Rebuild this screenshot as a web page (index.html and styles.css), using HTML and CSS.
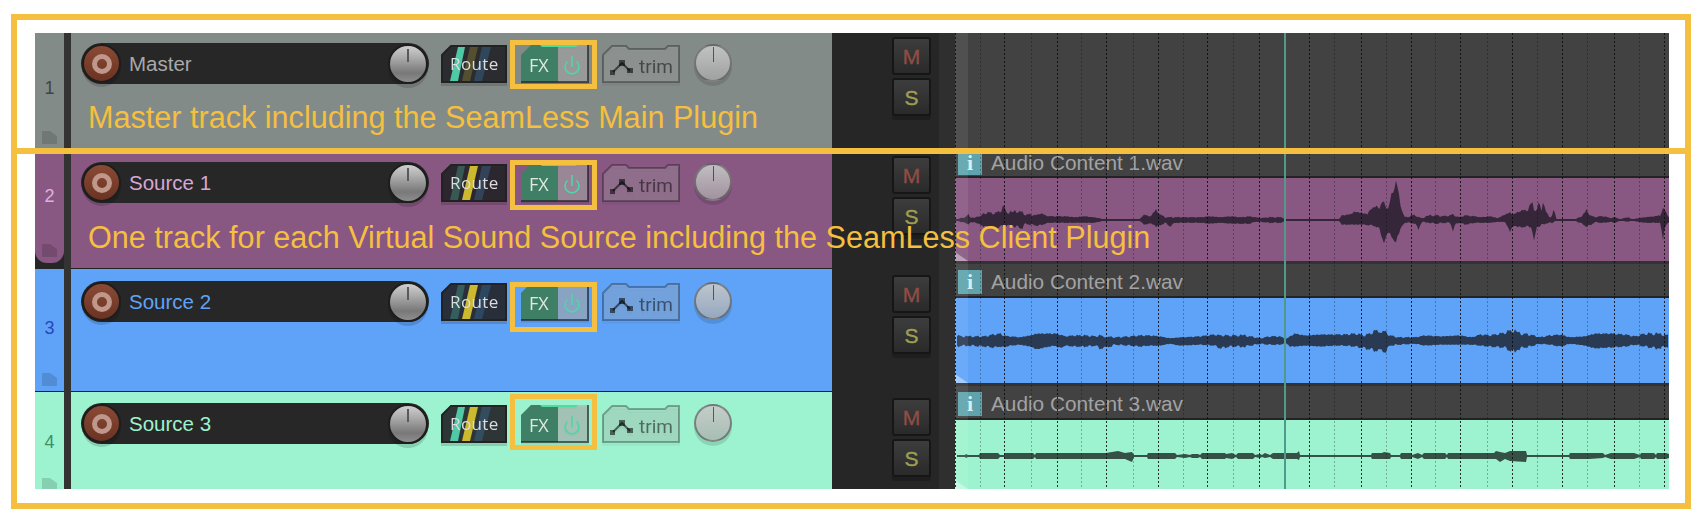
FILE: index.html
```html
<!DOCTYPE html>
<html lang="en">
<head>
  <meta charset="UTF-8">
  <title>SeamLess session tracks</title>
  <link rel="stylesheet" href="styles.css">
</head>
<body>
  <svg class="defs" width="0" height="0">
    <symbol id="route" viewBox="0 0 66 38">
      <path class="route-bg" d="M1 10L10 1H65V37H1Z"/>
      <path class="bar-teal" d="M17 2H24L17 36H9Z"/>
      <path class="bar-yellow" d="M29 2H37L29 36H21Z"/>
      <path class="bar-blue" d="M41 2H50L41 36H33Z"/>
    </symbol>
    <symbol id="fx" viewBox="0 0 69 39">
      <path class="fx-off" d="M38 1H68V38H38Z"/>
      <path class="fx-on" d="M1 11L11 1H38V38H1Z"/>
      <path class="fx-edge" d="M68 1V38H1"/>
      <path class="fx-led" d="M20 1H58L56 3H22Z"/>
      <path class="fx-power" d="M47.5 17.5A7 7 0 1 0 56.5 17.5M52 12V23"/>
    </symbol>
    <symbol id="trim" viewBox="0 0 78 38">
      <path class="trim-bg" d="M1 10L10 1H24L27 4H63L66 1H77V37H1Z"/>
      <path class="trim-line" d="M11 27L20 18L28 26"/>
      <path class="trim-dots" d="M8 25H13V30H8ZM17 15H23V21H17ZM25 23H31V28H25Z"/>
    </symbol>
    <symbol id="folder" viewBox="0 0 15 13">
      <path d="M0 0H8L15 5V13H0Z"/>
    </symbol>
  </svg>

  <div class="session">
    <div class="tracks">
      <div class="track t1">
        <div class="num"><span>1</span><svg class="folder"><use href="#folder"/></svg></div>
        <div class="sep"></div>
        <div class="panel">
          <div class="namebar">
            <div class="rec"></div>
            <span class="name">Master</span>
            <div class="knob"></div>
          </div>
          <svg class="btn-route" viewBox="0 0 66 38"><use href="#route"/><text class="route-text" x="9" y="25">Route</text></svg>
          <div class="fx-slot"><svg class="btn-fx" viewBox="0 0 69 39"><use href="#fx"/><text class="fx-text" x="9" y="28">FX</text></svg></div>
          <svg class="btn-trim" viewBox="0 0 78 38"><use href="#trim"/><text class="trim-text" x="37" y="28">trim</text></svg>
          <div class="pan"></div>
          <div class="note">Master track including the SeamLess Main Plugin</div>
        </div>
        <div class="ms"><div class="ms-btn mute">M</div><div class="ms-btn solo">S</div></div>
        <div class="gutter"></div>
      </div>

      <div class="track t2">
        <div class="num"><span>2</span><svg class="folder"><use href="#folder"/></svg></div>
        <div class="sep"></div>
        <div class="panel">
          <div class="namebar">
            <div class="rec"></div>
            <span class="name">Source 1</span>
            <div class="knob"></div>
          </div>
          <svg class="btn-route" viewBox="0 0 66 38"><use href="#route"/><text class="route-text" x="9" y="25">Route</text></svg>
          <div class="fx-slot"><svg class="btn-fx" viewBox="0 0 69 39"><use href="#fx"/><text class="fx-text" x="9" y="28">FX</text></svg></div>
          <svg class="btn-trim" viewBox="0 0 78 38"><use href="#trim"/><text class="trim-text" x="37" y="28">trim</text></svg>
          <div class="pan"></div>
          <div class="note">One track for each Virtual Sound Source including the SeamLess Client Plugin</div>
        </div>
        <div class="ms"><div class="ms-btn mute">M</div><div class="ms-btn solo">S</div></div>
        <div class="gutter"></div>
      </div>

      <div class="track t3">
        <div class="num"><span>3</span><svg class="folder"><use href="#folder"/></svg></div>
        <div class="sep"></div>
        <div class="panel">
          <div class="namebar">
            <div class="rec"></div>
            <span class="name">Source 2</span>
            <div class="knob"></div>
          </div>
          <svg class="btn-route" viewBox="0 0 66 38"><use href="#route"/><text class="route-text" x="9" y="25">Route</text></svg>
          <div class="fx-slot"><svg class="btn-fx" viewBox="0 0 69 39"><use href="#fx"/><text class="fx-text" x="9" y="28">FX</text></svg></div>
          <svg class="btn-trim" viewBox="0 0 78 38"><use href="#trim"/><text class="trim-text" x="37" y="28">trim</text></svg>
          <div class="pan"></div>
        </div>
        <div class="ms"><div class="ms-btn mute">M</div><div class="ms-btn solo">S</div></div>
        <div class="gutter"></div>
      </div>

      <div class="track t4">
        <div class="num"><span>4</span><svg class="folder"><use href="#folder"/></svg></div>
        <div class="sep"></div>
        <div class="panel">
          <div class="namebar">
            <div class="rec"></div>
            <span class="name">Source 3</span>
            <div class="knob"></div>
          </div>
          <svg class="btn-route" viewBox="0 0 66 38"><use href="#route"/><text class="route-text" x="9" y="25">Route</text></svg>
          <div class="fx-slot"><svg class="btn-fx" viewBox="0 0 69 39"><use href="#fx"/><text class="fx-text" x="9" y="28">FX</text></svg></div>
          <svg class="btn-trim" viewBox="0 0 78 38"><use href="#trim"/><text class="trim-text" x="37" y="28">trim</text></svg>
          <div class="pan"></div>
        </div>
        <div class="ms"><div class="ms-btn mute">M</div><div class="ms-btn solo">S</div></div>
        <div class="gutter"></div>
      </div>
    </div>

    <div class="arrange">
      <div class="empty-lane"></div>

      <div class="take">
        <div class="take-head head-1"><span class="info">i</span><span class="take-name">Audio Content 1.wav</span></div>
        <div class="take-body body-1"><svg class="wave" id="wave1" viewBox="955 -42 714 83" preserveAspectRatio="none"><path/><polygon class="fade" points="955,32 955,41 968,41"/></svg></div>
      </div>
      <div class="take">
        <div class="take-head"><span class="info">i</span><span class="take-name">Audio Content 2.wav</span></div>
        <div class="take-body body-2"><svg class="wave" id="wave2" viewBox="955 -43 714 85" preserveAspectRatio="none"><path/><polygon class="fade" points="955,33 955,42 968,42"/></svg></div>
      </div>
      <div class="take">
        <div class="take-head"><span class="info">i</span><span class="take-name">Audio Content 3.wav</span></div>
        <div class="take-body body-3"><svg class="wave" id="wave3" viewBox="955 -36 714 69" preserveAspectRatio="none"><path/><polygon class="fade" points="955,24 955,33 968,33"/></svg></div>
      </div>

      <svg class="grid" viewBox="955 0 714 456">
        <rect class="grid-strip" x="955" y="0" width="13" height="456"/>
        <path class="grid-weak" d="M980.5 0V456M1031.5 0V456M1081.5 0V456M1133.5 0V456M1183.5 0V456M1233.5 0V456M1334.5 0V456M1386.5 0V456M1435.5 0V456M1487.5 0V456M1537.5 0V456M1587.5 0V456M1639.5 0V456"/>
        <path class="grid-strong" d="M955.5 0V456M1004.5 0V456M1057.5 0V456M1106.5 0V456M1158.5 0V456M1207.5 0V456M1259.5 0V456M1309.5 0V456M1361.5 0V456M1411.5 0V456M1460.5 0V456M1512.5 0V456M1562.5 0V456M1614.5 0V456M1664.5 0V456"/>
        <path class="playhead" d="M1285 0V456"/>
      </svg>
    </div>
  </div>

  <div class="callout callout-master"></div>
  <div class="callout callout-sources"></div>

  <script src="waves.js"></script>
</body>
</html>
```

FILE: styles.css
```css
html, body {
  margin: 0;
  background: #fff;
}

body {
  position: relative;
  width: 1708px;
  height: 524px;
  overflow: hidden;
  font-family: "Liberation Sans", Arial, sans-serif;
}

.defs {
  position: absolute;
}

.session {
  display: flex;
  width: 1634px;
  height: 456px;
  margin: 33px 0 0 35px;
  overflow: hidden;
}

/* track control panels */
.tracks {
  width: 920px;
  flex: none;
  background: #262626;
}

.track {
  display: flex;
}

.t1 {
  --tint: #838b89;
  --num: #3d4544;
  --label: #a9a9a9;
  --num-top: 45px;
  --bar-top: 10px;
  --ms-top: 4px;
  --teal: 1;
  --yellow: .25;
  --blue: .3;
  --fx-top: -4px;
  --fx-h: 49px;
  height: 117px;
}

.t2 {
  --tint: #885782;
  --num: #e2aee0;
  --label: #d8a6d4;
  --num-top: 36px;
  --bar-top: 12px;
  --ms-top: 6px;
  --teal: .3;
  --yellow: 1;
  --blue: .3;
  --fx-top: -3px;
  --fx-h: 50px;
  height: 119px;
}

.t3 {
  --tint: #5fa3f8;
  --num: #2747b8;
  --label: #5fa3f8;
  --num-top: 49px;
  --bar-top: 12px;
  --ms-top: 6px;
  --teal: .3;
  --yellow: 1;
  --blue: .3;
  --fx-top: 0px;
  --fx-h: 50px;
  height: 123px;
}

.t4 {
  --tint: #9df3cf;
  --num: #3f8f68;
  --label: #9df3cf;
  --num-top: 40px;
  --bar-top: 11px;
  --ms-top: 6px;
  --teal: 1;
  --yellow: 1;
  --blue: .3;
  --fx-top: -10px;
  --fx-h: 56px;
  height: 105px;
}

.num {
  display: flex;
  flex-direction: column;
  align-items: center;
  box-sizing: border-box;
  width: 29px;
  padding-top: var(--num-top);
  background: var(--tint);
  color: var(--num);
  font-size: 18px;
  line-height: 20px;
  box-shadow: inset 0 -1px 0 #222;
}

.t2 .num {
  height: 113px;
  border-radius: 0 0 12px 12px;
  box-shadow: none;
}

.folder {
  width: 15px;
  height: 13px;
  margin-top: auto;
  margin-bottom: 6px;
  fill: rgba(0, 0, 0, .14);
}

.sep {
  width: 7px;
  background: #333;
}

.panel {
  position: relative;
  display: flex;
  align-items: flex-start;
  box-sizing: border-box;
  width: 761px;
  padding: var(--bar-top) 0 0 10px;
  background: var(--tint);
  box-shadow: inset 0 -1px 0 #222;
}

.namebar {
  display: flex;
  align-items: center;
  box-sizing: border-box;
  width: 348px;
  height: 41px;
  padding: 0 1px;
  background: #272727;
  border-radius: 21px;
}

.rec {
  display: flex;
  align-items: center;
  justify-content: center;
  box-sizing: border-box;
  width: 39px;
  height: 39px;
  border: 2px solid #1d1d1d;
  border-radius: 50%;
  background: linear-gradient(#8a4a35, #6a3322);
  box-shadow: 0 4px 0 rgba(0, 0, 0, .15);
}

.rec::after {
  content: "";
  width: 10px;
  height: 10px;
  border: 5px solid #bf978b;
  border-radius: 50%;
}

.name {
  margin: 1px 0 0 8px;
  color: var(--label);
  font-size: 20.5px;
}

.knob {
  position: relative;
  box-sizing: border-box;
  width: 40px;
  height: 40px;
  margin-left: auto;
  border: 2px solid #1d1d1d;
  border-radius: 50%;
  background: linear-gradient(#cfcfcf, #b4b4b4 25%, #787878 75%, #8e8e8e);
  box-shadow: 0 4px 0 rgba(0, 0, 0, .15);
}

.knob::after {
  content: "";
  position: absolute;
  left: 17px;
  top: 3px;
  width: 2px;
  height: 13px;
  background: #5a5a5a;
}

.btn-route {
  width: 66px;
  height: 38px;
  margin: 2px 0 0 12px;
  filter: drop-shadow(0 3px 0 rgba(0, 0, 0, .15));
}

.route-bg {
  fill: rgba(36, 36, 40, .9);
  stroke: #222;
  stroke-width: 2;
}

.bar-teal {
  fill: #4fc9a6;
  opacity: var(--teal);
}

.bar-yellow {
  fill: #cdb92f;
  opacity: var(--yellow);
}

.bar-blue {
  fill: #3a80b8;
  opacity: var(--blue);
}

.route-text {
  fill: #dcdcdc;
  font-family: "Open Sans", sans-serif;
  font-size: 17px;
  letter-spacing: .4px;
}

.fx-slot {
  position: relative;
  display: flex;
  margin: 1px 0 0 13px;
}

.fx-slot::after {
  content: "";
  position: absolute;
  left: -10px;
  top: var(--fx-top);
  box-sizing: border-box;
  width: 87px;
  height: var(--fx-h);
  border: 5px solid #f5bf3f;
}

.btn-fx {
  width: 69px;
  height: 39px;
  filter: drop-shadow(0 2px 0 rgba(0, 0, 0, .1));
}

.fx-off {
  fill: rgba(170, 170, 170, .6);
}

.fx-on {
  fill: #3f7f66;
}

.fx-edge {
  fill: none;
  stroke: rgba(30, 30, 30, .65);
  stroke-width: 2;
}

.fx-led {
  fill: #4fdc9c;
}

.fx-text {
  fill: #e2e8e4;
  font-family: "Open Sans", sans-serif;
  font-size: 18px;
}

.fx-power {
  fill: none;
  stroke: #4fd6a8;
  stroke-width: 1.6;
}

.btn-trim {
  width: 78px;
  height: 38px;
  margin: 2px 0 0 13px;
  filter: drop-shadow(0 3px 0 rgba(0, 0, 0, .1));
}

.trim-bg {
  fill: rgba(170, 170, 170, .3);
  stroke: rgba(0, 0, 0, .3);
  stroke-width: 2;
}

.trim-line {
  fill: none;
  stroke: rgba(0, 0, 0, .55);
  stroke-width: 2;
}

.trim-dots {
  fill: rgba(0, 0, 0, .55);
}

.trim-text {
  fill: rgba(0, 0, 0, .5);
  font-family: Roboto, sans-serif;
  font-size: 19px;
}

.pan {
  position: relative;
  box-sizing: border-box;
  width: 38px;
  height: 38px;
  margin: 1px 0 0 14px;
  border: 2px solid rgba(0, 0, 0, .35);
  border-radius: 50%;
  background: linear-gradient(rgba(200, 200, 200, .9), rgba(170, 170, 170, .72));
  box-shadow: 0 4px 0 rgba(0, 0, 0, .12);
}

.pan::after {
  content: "";
  position: absolute;
  left: 17px;
  top: 1px;
  width: 1px;
  height: 15px;
  background: rgba(0, 0, 0, .55);
}

.note {
  position: absolute;
  z-index: 2;
  left: 17px;
  top: 67px;
  color: #f5bf3f;
  font-size: 30.6px;
  line-height: 34px;
  white-space: nowrap;
}

.t2 .note {
  top: 70px;
}

/* mute and solo */
.ms {
  display: flex;
  flex-direction: column;
  gap: 3px;
  box-sizing: border-box;
  width: 107px;
  padding: var(--ms-top) 0 0 60px;
  background: #262626;
}

.ms-btn {
  box-sizing: border-box;
  width: 39px;
  height: 38px;
  border: 2px solid #161616;
  border-radius: 3px;
  background: linear-gradient(#3d3d3d, #2a2a2a);
  text-align: center;
  font-size: 21px;
  line-height: 35px;
  -webkit-text-stroke: .4px currentColor;
}

.mute {
  color: #8f4d45;
}

.solo {
  color: #9f9f52;
  box-shadow: 0 4px 0 rgba(0, 0, 0, .2);
}

.gutter {
  width: 16px;
  background: #2f2f2f;
}

/* arrange view */
.arrange {
  position: relative;
  display: flex;
  flex-direction: column;
  width: 714px;
  flex: none;
  background: #424242;
}

.empty-lane {
  height: 113px;
  flex: none;
}

.take-head {
  display: flex;
  align-items: center;
  box-sizing: border-box;
  height: 32px;
  padding: 4px 0 0 3px;
}

.head-1 {
  height: 30px;
}

.info {
  width: 24px;
  height: 24px;
  background: #5ea3ad;
  color: #d8eef0;
  text-align: center;
  font-family: "Liberation Serif", serif;
  font-size: 22px;
  font-weight: bold;
  line-height: 24px;
}

.take-name {
  margin-left: 9px;
  color: #a3a3a3;
  font-size: 20.8px;
}

.take-body {
  display: flex;
  border-top: 2px solid #232323;
  border-bottom: 3px solid #333;
}

.body-1 {
  height: 83px;
  background: #885782;
  color: #35263a;
}

.body-2 {
  height: 85px;
  background: #5fa3f8;
  color: #2a3a52;
}

.body-3 {
  height: 69px;
  background: #9df3cf;
  color: #355045;
}

.wave {
  width: 100%;
  height: 100%;
  fill: currentColor;
}

.fade {
  fill: rgba(255, 255, 255, .4);
}

.grid {
  position: absolute;
  left: 0;
  top: 0;
  width: 714px;
  height: 456px;
  fill: none;
}

.grid-strip {
  fill: rgba(255, 255, 255, .08);
}

.grid-weak {
  stroke: rgba(0, 0, 0, .28);
  stroke-dasharray: 2 2;
}

.grid-strong {
  stroke: rgba(10, 10, 10, .85);
  stroke-dasharray: 2 2;
}

.playhead {
  stroke: #4f9a88;
  stroke-width: 2;
}

/* yellow boxes drawn over the screenshot */
.callout {
  position: absolute;
  z-index: 3;
  left: 11px;
  box-sizing: border-box;
  width: 1680px;
  border: 6px solid #f5bf3f;
}

.callout-master {
  top: 14px;
  height: 140px;
}

.callout-sources {
  top: 148px;
  height: 361px;
}
```

FILE: waves.js
```js
// [x, above centre, below centre] for each waveform, taken off the reference
const waves = {
  wave1: [[955,1,1],[958,1,1],[960,2,2],[966,3,3],[968,7,5],[970,3,3],[975,2,2],[978,5,5],[980,3,4],[983,7,7],[990,8,8],[995,7,9],[1000,10,8],[1002,12,6],[1004,15,6],[1006,9,7],[1012,8,6],[1018,10,8],[1022,8,9],[1025,6,4],[1030,6,5],[1037,5,6],[1040,8,6],[1045,5,4],[1050,4,3],[1065,4,3],[1075,3,3],[1085,4,3],[1093,3,3],[1100,2,2],[1102,1,1],[1140,1,1],[1142,5,4],[1150,5,5],[1155,9,5],[1157,11,8],[1160,6,6],[1165,3,3],[1170,3,7],[1175,3,3],[1200,3,3],[1210,4,4],[1220,3,3],[1230,4,4],[1240,3,4],[1250,4,4],[1255,3,2],[1262,2,2],[1268,3,3],[1282,3,3],[1285,1,1],[1340,1,1],[1341,5,5],[1350,6,5],[1355,9,5],[1365,7,5],[1368,6,6],[1370,12,5],[1378,15,8],[1380,12,10],[1382,20,20],[1385,18,25],[1388,10,12],[1391,25,15],[1394,38,28],[1397,38,18],[1400,20,12],[1404,3,3],[1410,4,3],[1415,6,4],[1418,3,10],[1422,2,2],[1430,5,3],[1435,5,4],[1445,4,3],[1450,5,3],[1453,6,11],[1456,4,4],[1460,3,3],[1465,5,5],[1475,4,3],[1480,3,3],[1490,4,3],[1498,2,2],[1505,6,2],[1510,8,12],[1514,6,6],[1520,10,8],[1528,11,7],[1532,20,8],[1534,12,26],[1537,10,6],[1539,22,8],[1541,8,5],[1543,22,5],[1545,10,4],[1550,3,3],[1552,4,3],[1554,13,2],[1556,1,1],[1575,1,1],[1580,3,3],[1585,8,6],[1587,11,7],[1590,5,6],[1595,3,2],[1600,4,3],[1605,4,3],[1610,2,2],[1615,3,3],[1620,1,1],[1628,3,2],[1632,1,1],[1645,3,3],[1655,4,3],[1660,5,3],[1663,12,20],[1665,10,6],[1669,3,3]],
  wave2: [[957,6,6],[962,5,5],[970,5,5],[985,5,6],[993,7,7],[1000,8,6],[1003,6,7],[1010,5,5],[1020,4,4],[1030,6,6],[1037,8,9],[1045,8,7],[1055,8,5],[1060,7,8],[1065,5,5],[1075,6,6],[1085,6,6],[1095,5,5],[1100,6,8],[1105,5,8],[1115,4,4],[1130,5,5],[1140,6,6],[1150,6,5],[1160,5,5],[1170,3,3],[1180,4,5],[1200,5,4],[1215,7,5],[1220,6,8],[1230,6,6],[1245,6,6],[1260,3,3],[1270,5,4],[1280,5,4],[1286,2,2],[1290,5,6],[1295,8,6],[1305,6,5],[1320,7,6],[1335,7,5],[1345,7,5],[1355,8,6],[1365,6,8],[1378,12,11],[1385,10,12],[1390,6,5],[1398,4,4],[1415,4,3],[1425,6,5],[1440,5,4],[1460,6,4],[1472,4,4],[1480,7,5],[1490,6,6],[1505,9,7],[1512,12,12],[1520,8,8],[1530,7,6],[1540,4,3],[1550,6,4],[1560,7,6],[1570,4,3],[1585,5,5],[1595,8,8],[1610,8,7],[1625,7,6],[1635,5,4],[1645,8,6],[1655,8,8],[1669,6,6]],
  wave3: [[957,1,1],[965,1,1],[966,2,2],[968,1,1],[979,1,1],[980,3,3],[998,3,3],[1000,1,1],[1004,1,1],[1005,3,3],[1033,3,3],[1035,1,1],[1036,3,3],[1104,3,3],[1106,3,3],[1118,5,3],[1125,3,3],[1132,4,6],[1134,1,1],[1147,1,1],[1148,3,3],[1175,3,3],[1177,1,1],[1185,2,2],[1190,1,1],[1192,2,2],[1198,2,2],[1200,1,1],[1202,3,3],[1225,3,3],[1226,2,2],[1232,3,3],[1236,1,1],[1238,3,3],[1253,3,3],[1255,1,1],[1260,2,2],[1262,1,1],[1265,3,2],[1270,1,1],[1273,3,3],[1297,3,3],[1299,5,4],[1300,1,1],[1371,1,1],[1372,3,3],[1382,3,3],[1384,4,3],[1390,3,3],[1391,1,1],[1400,1,1],[1401,3,3],[1411,3,3],[1412,1,1],[1418,3,3],[1422,1,1],[1424,3,3],[1445,3,3],[1447,1,1],[1448,3,3],[1494,3,3],[1496,5,3],[1500,4,6],[1505,3,3],[1510,5,5],[1526,5,6],[1527,1,1],[1569,1,1],[1570,3,3],[1587,3,3],[1589,3,3],[1603,3,2],[1605,1,1],[1611,3,3],[1634,3,3],[1640,1,1],[1641,3,3],[1654,3,3],[1656,1,1],[1657,3,3],[1666,3,3],[1669,2,2]]
};

// Walk along the envelope in small steps, with some roughness so it does not look smoothed
function roughen(points) {
  const out = [];
  let i = 0;
  for (let x = points[0][0]; x <= 1669; x += 1.5) {
    while (i < points.length - 2 && points[i + 1][0] < x) i++;
    const a = points[i], b = points[i + 1];
    const t = Math.min(1, (x - a[0]) / (b[0] - a[0]));
    const noise = 0.72 + 0.4 * Math.abs(Math.sin(x * 12.9898) * 1.7 % 1);
    const up = a[1] + (b[1] - a[1]) * t;
    const down = a[2] + (b[2] - a[2]) * t;
    out.push([x, up <= 1.5 ? 1 : up * noise, down <= 1.5 ? 1 : down * noise]);
  }
  return out;
}

Object.keys(waves).forEach(id => {
  const points = id === 'wave3' ? waves[id] : roughen(waves[id]);
  const top = points.map(p => `${p[0]},${-p[1]}`);
  const bottom = points.slice().reverse().map(p => `${p[0]},${p[2]}`);
  document.querySelector(`#${id} path`).setAttribute('d', `M${top.join('L')}L${bottom.join('L')}Z`);
});
```
